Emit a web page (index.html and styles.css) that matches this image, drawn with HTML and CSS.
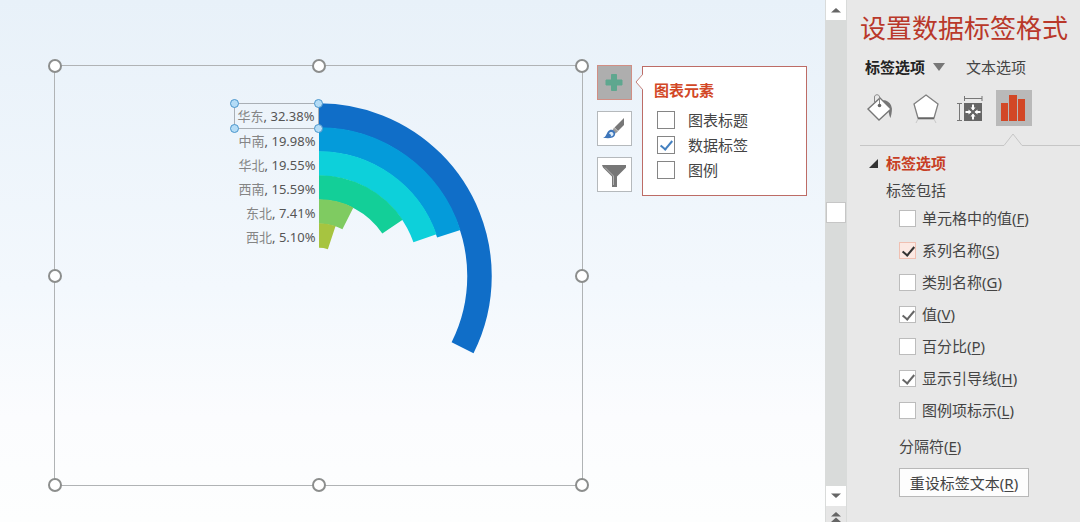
FILE: index.html
```html
<!DOCTYPE html>
<html lang="zh-CN">
<head>
  <meta charset="UTF-8" />
  <title>设置数据标签格式</title>
  <link rel="stylesheet" href="styles.css">
</head>
<body>

  <main class="slide">
    <div class="chart">
      <ul class="labels">
        <li class="selected"><span>华东</span>, 32.38%
          <i class="dot tl"></i><i class="dot tr"></i><i class="dot bl"></i><i class="dot br"></i>
        </li>
        <li><span>中南</span>, 19.98%</li>
        <li><span>华北</span>, 19.55%</li>
        <li><span>西南</span>, 15.59%</li>
        <li><span>东北</span>, 7.41%</li>
        <li><span>西北</span>, 5.10%</li>
      </ul>
      <svg class="rings" viewBox="0 0 176 346" aria-hidden="true">
        <g fill="none" stroke-width="24.5" transform="translate(0 173) rotate(-90)">
          <circle r="160.5" pathLength="100" stroke-dasharray="32.38 100" stroke="#106ec8" />
          <circle r="136.5" pathLength="100" stroke-dasharray="19.98 100" stroke="#049bda" />
          <circle r="112.5" pathLength="100" stroke-dasharray="19.55 100" stroke="#0dd0da" />
          <circle r="88.5" pathLength="100" stroke-dasharray="15.59 100" stroke="#13cf98" />
          <circle r="64.5" pathLength="100" stroke-dasharray="7.41 100" stroke="#7fcb61" />
          <circle r="40.5" pathLength="100" stroke-dasharray="5.1 100" stroke="#a7c440" />
        </g>
      </svg>
      <i class="handle n w"></i><i class="handle n c"></i><i class="handle n e"></i>
      <i class="handle m w"></i><i class="handle m e"></i>
      <i class="handle s w"></i><i class="handle s c"></i><i class="handle s e"></i>
    </div>

    <div class="tools">
      <button class="active" aria-label="图表元素">
        <svg width="33" height="33" viewBox="0 0 33 33"><path d="M13.500 8.500h5v5.500h5.500v5h-5.500v5.500h-5v-5.500h-5.500v-5h5.500z" fill="#5fa78f" stroke="#5fa78f" stroke-linejoin="round" /></svg>
      </button>
      <button aria-label="图表样式">
        <svg width="33" height="33" viewBox="0 0 33 33">
          <path d="M26 6v7l-6 6-3.500-3.500z" fill="#777" />
          <path d="M16 15.500l4 4-2.500 2-3-3z" fill="#999" />
          <path d="M5 26c3-1 3-3.500 5-6.500 2-2.500 5-2 6.500 0 1.500 2 .5 5-2 6-3 1-6 .5-9.500.5z" fill="#3e76bb" />
          <path d="M11 21.500c1-2 4-2 4.500.5 0 1.500-1.500 2.500-3 2.500 1-1 .5-2-1.500-3z" fill="#dcebf8" />
        </svg>
      </button>
      <button aria-label="图表筛选器">
        <svg width="33" height="33" viewBox="0 0 33 33">
          <path d="M4 7h24v2.500l-9 9V29h-5V18.500l-9-9z" fill="#777" />
          <path d="M7 9.500l8.500 8.500v9" fill="none" stroke="#b4b4b4" />
        </svg>
      </button>
    </div>

    <section class="popover">
      <svg class="beak" width="9" height="18" viewBox="0 0 9 18"><path d="M9 1L2 9l7 8" fill="#fff" stroke="#c4807a" /></svg>
      <h2>图表元素</h2>
      <label><input type="checkbox">图表标题</label>
      <label><input type="checkbox" checked>数据标签</label>
      <label><input type="checkbox">图例</label>
    </section>
  </main>

  <div class="scrollbar">
    <button aria-label="向上滚动"><svg width="10" height="6" viewBox="0 0 10 6"><path d="M0 5.500L5 1l5 4.500z" /></svg></button>
    <div class="track"><div class="thumb"></div></div>
    <button aria-label="向下滚动"><svg width="10" height="6" viewBox="0 0 10 6"><path d="M0 .5L5 5l5-4.500z" /></svg></button>
    <button class="prev" aria-label="上一张幻灯片"><svg width="10" height="12" viewBox="0 0 10 12"><path d="M0 5.500L5 1l5 4.500zM0 11l5-4.500L10 11z" /></svg></button>
  </div>

  <aside class="pane">
    <h1>设置数据标签格式</h1>
    <nav class="tabs">
      <button class="current">标签选项 <svg width="12" height="8" viewBox="0 0 12 8"><path d="M0 0h12L6 8z" fill="#777" /></svg></button>
      <button>文本选项</button>
    </nav>
    <div class="icons">
      <button aria-label="填充与线条">
        <svg width="36" height="36" viewBox="0 0 36 36">
          <path d="M19 10c8 1 11 7 7.500 18-2-3-1-7-4-11z" fill="#777" />
          <path d="M16 8L27 19 15 30 4 19z" fill="#fff" stroke="#777" stroke-width="1.400" />
          <path d="M10.500 14V7c0-3 5-3 5 0v7" fill="none" stroke="#888" />
          <circle cx="15.500" cy="15.500" r="1.800" fill="#666" />
        </svg>
      </button>
      <button aria-label="效果">
        <svg width="36" height="36" viewBox="0 0 36 36">
          <path d="M18 5l12 9-4 14H10L6 14z" fill="#fff" stroke="#808080" stroke-width="1.300" />
          <path d="M10 28.500h16" stroke="#666" stroke-width="1.600" />
          <path d="M10 29l-2 4M26 29l2 4" stroke="#c8c8c8" />
        </svg>
      </button>
      <button aria-label="大小与属性">
        <svg width="36" height="36" viewBox="0 0 36 36">
          <rect x="12" y="13" width="18" height="18" fill="#666" />
          <path d="M12 8.500h18M12.500 6v5M30 6v5M7.500 13v18M5 13.500h5M5 30.500h5" stroke="#777" />
          <path d="M21 14.500v5M21 24.500v5M13.500 22h5M23.500 22h5" stroke="#fff" stroke-width="2" />
          <path d="M18.500 17.500h5L21 20.500zM18.500 26.500h5L21 23.500zM16.500 19.500v5L19.500 22zM25.500 19.500v5L22.500 22z" fill="#fff" />
        </svg>
      </button>
      <button class="active" aria-label="标签选项">
        <svg width="36" height="36" viewBox="0 0 36 36"><path d="M5 13h7v18H5zM13 5h8v26h-8zM22 9h7v22h-7z" fill="#d24726" /></svg>
      </button>
    </div>
    <div class="divider">
      <span></span>
      <svg width="18" height="13" viewBox="0 0 18 13"><path d="M0 12.500L9 1l9 11.500" fill="none" stroke="#c6c6c6" /></svg>
      <span class="end"></span>
    </div>

    <section class="options">
      <h2><svg width="9" height="9" viewBox="0 0 9 9"><path d="M9 0v9H0z" fill="#333" /></svg>标签选项</h2>
      <h3>标签包括</h3>
      <label><input type="checkbox"><span>单元格中的值(<u>F</u>)</span></label>
      <label><input type="checkbox" class="hot" checked><span>系列名称(<u>S</u>)</span></label>
      <label><input type="checkbox"><span>类别名称(<u>G</u>)</span></label>
      <label><input type="checkbox" checked><span>值(<u>V</u>)</span></label>
      <label><input type="checkbox"><span>百分比(<u>P</u>)</span></label>
      <label><input type="checkbox" checked><span>显示引导线(<u>H</u>)</span></label>
      <label><input type="checkbox"><span>图例项标示(<u>L</u>)</span></label>
      <p>分隔符(<u>E</u>)</p>
      <button class="reset">重设标签文本(<u>R</u>)</button>
    </section>
  </aside>

</body>
</html>
```

FILE: styles.css
```css
* {
  box-sizing: border-box;
}
body {
  margin: 0;
  min-height: 100vh;
  display: flex;
  font-family: "Noto Sans", "Noto Sans CJK SC", sans-serif;
  font-size: 15px;
  line-height: 24px;
  color: #444;
  background: #e8e8e8;
}
h1, h2, h3, p, ul {
  margin: 0;
  padding: 0;
}
button {
  font: inherit;
  color: inherit;
  padding: 0;
  border: none;
  background: none;
  cursor: pointer;
}
svg {
  display: block;
}

/* slide */
.slide {
  flex: 1;
  display: flex;
  align-items: flex-start;
  padding: 65px 18px 36px 54px;
  background: linear-gradient(#e8f1f9, #f3f8fd 55%, #fbfcfe 80%, #fdfefe);
}
.chart {
  position: relative;
  flex: 1;
  align-self: stretch;
  display: grid;
  grid-template-columns: 1fr 1fr;
  align-items: start;
  padding-top: 37px;
  border: 1px solid #b0b3b5;
}
.labels {
  list-style: none;
  justify-self: end;
  font-size: 13px;
  color: #555;
  text-align: right;
}
.labels li {
  position: relative;
  height: 24px;
  padding: 0 3px;
  white-space: nowrap;
}
.labels li span {
  color: #858585;
}
.labels .selected {
  height: 26px;
  line-height: 24px;
  border: 1px solid #a9afb5;
}
.rings {
  width: 176px;
  height: 346px;
}
.dot {
  position: absolute;
  width: 9px;
  height: 9px;
  border: 1px solid #4a96cc;
  border-radius: 50%;
  background: #b4dcf6;
}
.tl, .tr { top: -5px; }
.bl, .br { bottom: -5px; }
.tl, .bl { left: -5px; }
.tr, .br { right: -5px; }

.handle {
  position: absolute;
  width: 14px;
  height: 14px;
  border: 2px solid #8c8e8d;
  border-radius: 50%;
  background: #fff;
}
.n { top: -7px; }
.m { top: calc(50% - 7px); }
.s { bottom: -7px; }
.w { left: -7px; }
.c { left: calc(50% - 7px); }
.e { right: -7px; }

.tools {
  display: grid;
  gap: 11px;
  margin: 0 10px 0 14px;
}
.tools button {
  width: 35px;
  height: 35px;
  border: 1px solid #b5b9bc;
  background: #fff;
}
.tools .active {
  border-color: #d18e84;
  background: #aeaeae;
}

.popover {
  position: relative;
  width: 165px;
  height: 130px;
  margin-top: 1px;
  padding: 11px;
  border: 1px solid #bd6c66;
  background: #fff;
}
.popover h2 {
  font-size: 15px;
  line-height: 24px;
  color: #d24726;
  margin-bottom: 5px;
}
.popover label {
  display: flex;
  align-items: center;
  gap: 13px;
  height: 25px;
  padding-left: 3px;
}
.beak {
  position: absolute;
  left: -9px;
  top: 6px;
}

input[type="checkbox"] {
  appearance: none;
  position: relative;
  flex: none;
  width: 17px;
  height: 17px;
  margin: 0;
  border: 1px solid #bcbcbc;
  background: #fff;
}
input:checked::after {
  content: "";
  position: absolute;
  left: 5px;
  top: 1px;
  width: 5px;
  height: 10px;
  border: solid #666;
  border-width: 0 2px 2px 0;
  transform: rotate(40deg);
}
.popover input[type="checkbox"] {
  width: 18px;
  height: 18px;
  border-color: #858585;
}
.popover input:checked::after {
  border-color: #4480c0;
}
input[type="checkbox"].hot {
  border-color: #f0c0b2;
  background: #fce9e3;
}
input.hot:checked::after {
  border-color: #333;
}

/* scrollbar */
.scrollbar {
  width: 22px;
  height: 100vh;
  display: flex;
  flex-direction: column;
  padding: 0 1px;
  background: #d9dbda;
}
.scrollbar button {
  flex: none;
  height: 20px;
  background: #fff;
  display: grid;
  place-items: center;
  fill: #666;
}
.scrollbar .prev {
  height: 16px;
  padding-top: 5px;
  background: #e6e6e6;
  overflow: hidden;
  place-items: start center;
}
.track {
  position: relative;
  flex: 1;
}
.thumb {
  position: absolute;
  top: 39%;
  width: 100%;
  height: 21px;
  border: 1px solid #c6c6c6;
  background: #fff;
}

/* format pane */
.pane {
  width: 233px;
  padding: 8px 0 0 13px;
}
.pane h1 {
  font-size: 26px;
  line-height: 40px;
  font-weight: 400;
  color: #b9382a;
  white-space: nowrap;
}
.tabs {
  display: flex;
  gap: 21px;
  margin-top: 7px;
  padding-left: 5px;
}
.tabs .current {
  display: flex;
  align-items: center;
  gap: 8px;
  font-weight: 700;
  color: #222;
}
.icons {
  display: flex;
  gap: 8px;
  margin-top: 11px;
  padding-left: 4px;
}
.icons .active {
  background: #b9b9b9;
}
.divider {
  display: flex;
  align-items: flex-end;
  margin-top: 7px;
}
.divider span {
  flex: 1;
  border-bottom: 1px solid #c6c6c6;
}
.divider .end {
  flex: none;
  width: 58px;
}

.options {
  padding-left: 39px;
}
.options h2, .options h3 {
  display: flex;
  align-items: center;
  margin-left: -13px;
  font-size: 15px;
  font-weight: 400;
}
.options h2 {
  gap: 8px;
  margin: 5px 0 3px -30px;
  font-weight: 700;
  color: #c73e24;
}
.options label {
  display: flex;
  align-items: center;
  gap: 6px;
  height: 32px;
}
.options p {
  margin: 8px 0 10px;
}
.options u {
  text-underline-offset: 2px;
}
.reset {
  width: 130px;
  height: 29px;
  border: 1px solid #b8b8b8;
  background: #fdfdfd;
}
```
